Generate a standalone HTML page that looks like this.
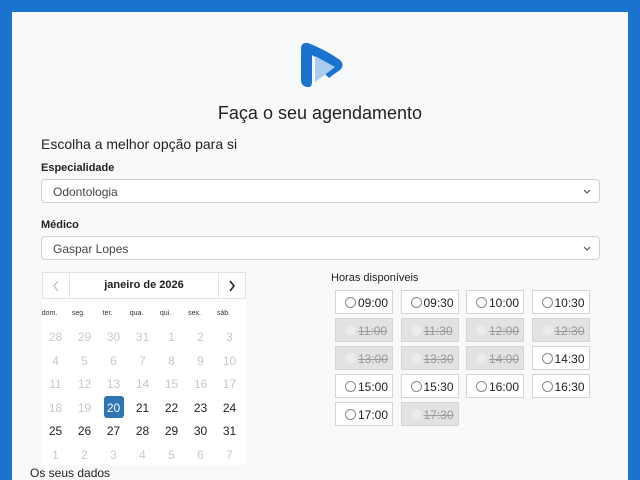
<!DOCTYPE html>
<html><head><meta charset="utf-8"><style>
*{box-sizing:border-box;margin:0;padding:0}
html,body{width:640px;height:480px;overflow:hidden}
body{background:#1a73cf;font-family:"Liberation Sans",sans-serif;position:relative}
#p{position:absolute;left:12px;top:12px;width:616px;height:468px;background:#f8f9fa}
.a{position:absolute}
.sel{position:absolute;left:41px;width:559px;height:24px;border:1px solid #d0d0d0;border-radius:4px;background:#fff;font-size:12px;color:#444;padding:5px 0 0 11px}
.sel svg{position:absolute;right:8px;top:9px}
.lbl{position:absolute;left:41px;font-size:11px;font-weight:bold;color:#222}
.cal{position:absolute;left:42px;top:272px;width:204px;height:193px;background:#fff}
.d{position:absolute;width:29px;text-align:center;font-size:12px;color:#222}
.m{color:#c8c8c8}
.dn{position:absolute;width:29px;text-align:center;font-size:7px;color:#333;top:38px}
.t{position:absolute;width:58px;height:24px;border:1px solid #d4d4d4;background:#fff;font-size:12px;color:#222;padding-top:5px;padding-left:9px;white-space:nowrap}
.t i{display:inline-block;width:11px;height:11px;border:1px solid #888;border-radius:50%;vertical-align:-1px;margin-right:2px}
.t.x{background:#e2e2e2;color:#999;text-decoration:line-through}
.t.x i{border-color:#e8e8e8;background:#ececec}
</style></head><body>
<div id="p"></div>
<svg class="a" style="left:300px;top:42px" width="44" height="46" viewBox="0 0 44 46">
<path d="M1 7 Q1 0 8 1 Q26 8 40 18 Q45 23 40 28 Q34 32 29 36 L21 28 L27 23 L12 13 L12 40 Q12 46 7 45 Q1 44 1 38 Z" fill="#1a73cf"/>
<path d="M15 14 L15 40 Q25 33 35 25 Z" fill="#a9ccf0"/>
</svg>
<div class="a" style="left:0;width:640px;top:103px;text-align:center;font-size:18px;color:#222">Faça o seu agendamento</div>
<div class="a" style="left:41px;top:136px;font-size:14px;color:#222">Escolha a melhor opção para si</div>
<div class="lbl" style="top:162px">Especialidade</div>
<div class="sel" style="top:179px">Odontologia<svg width="8" height="5"><path d="M1 1 L4 4 L7 1" stroke="#555" fill="none" stroke-width="1.2"/></svg></div>
<div class="lbl" style="top:219px">Médico</div>
<div class="sel" style="top:236px">Gaspar Lopes<svg width="8" height="5"><path d="M1 1 L4 4 L7 1" stroke="#555" fill="none" stroke-width="1.2"/></svg></div>
<div class="cal">
<div class="a" style="left:0;top:0;width:204px;height:27px;border:1px solid #e2e2e2"></div>
<div class="a" style="left:27px;top:0;width:1px;height:27px;background:#e2e2e2"></div>
<div class="a" style="left:176px;top:0;width:1px;height:27px;background:#e2e2e2"></div>
<svg class="a" style="left:10px;top:8px" width="8" height="12"><path d="M6 1 L2 6 L6 11" stroke="#bbb" fill="none" stroke-width="1.2"/></svg>
<svg class="a" style="left:186px;top:8px" width="8" height="12"><path d="M2 1 L6 6 L2 11" stroke="#222" fill="none" stroke-width="1.6"/></svg>
<div class="a" style="left:27px;width:150px;top:7px;text-align:center;font-weight:bold;color:#222;font-size:11px">janeiro de 2026</div>
<div class="dn" style="left:-7px">dom.</div><div class="dn" style="left:22px">seg.</div><div class="dn" style="left:51px">ter.</div><div class="dn" style="left:80px">qua.</div><div class="dn" style="left:109px">qui.</div><div class="dn" style="left:138px">sex.</div><div class="dn" style="left:167px">sáb.</div>
<div class="a" style="left:62px;top:124px;width:20px;height:22px;background:#2f74b5;border-radius:3px"></div>
</div>
<div id="days"></div>
<script>
var rows=[[28,29,30,31,1,2,3],[4,5,6,7,8,9,10],[11,12,13,14,15,16,17],[18,19,20,21,22,23,24],[25,26,27,28,29,30,31],[1,2,3,4,5,6,7]];
var h='';rows.forEach(function(r,i){r.forEach(function(n,j){var m=(i<3)||(i==3&&j<2)||i==5;var s=(i==3&&j==2);h+='<div class="d'+(m?' m':'')+'" style="left:'+(41+j*29)+'px;top:'+(330+i*23.5)+'px;'+(s?'color:#fff':'')+'">'+n+'</div>';});});
var t=[['09:00',0],['09:30',0],['10:00',0],['10:30',0],['11:00',1],['11:30',1],['12:00',1],['12:30',1],['13:00',1],['13:30',1],['14:00',1],['14:30',0],['15:00',0],['15:30',0],['16:00',0],['16:30',0],['17:00',0],['17:30',1]];
t.forEach(function(x,k){var c=k%4,r=Math.floor(k/4);h+='<div class="t'+(x[1]?' x':'')+'" style="left:'+(335+c*65.5)+'px;top:'+(290+r*28)+'px"><i></i>'+x[0]+'</div>';});
document.getElementById('days').innerHTML=h;
</script>
<div class="a" style="left:331px;top:272px;font-size:11px;color:#222">Horas disponíveis</div>
<div class="a" style="left:30px;top:466px;font-size:12px;color:#222">Os seus dados</div>
</body></html>
